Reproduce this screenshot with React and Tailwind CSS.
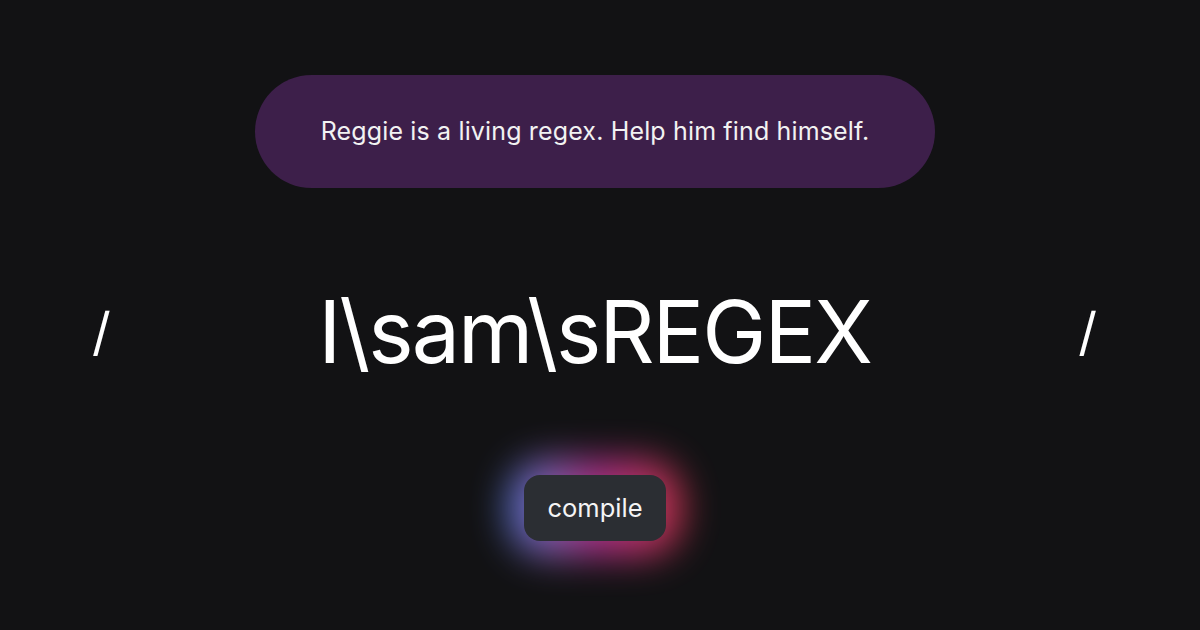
export default function App() {
  return (
    <div
      className="w-[1200px] h-[630px] bg-[#121214] text-white flex flex-col items-center pr-[10px]"
      style={{ fontFamily: 'Inter, "Noto Sans", sans-serif' }}
    >
      {/* prompt */}
      <div className="mt-[75px] w-[680px] h-[113px] rounded-full bg-[#3d1f4a] flex items-center justify-center">
        <p className="text-[25px] text-[#f2f2f2] tracking-[0.15px]">
          Reggie is a living regex. Help him find himself.
        </p>
      </div>

      {/* regex line */}
      <div className="mt-[98px] w-full flex items-center justify-between pl-[92px] pr-[93px] h-[92px]">
        <span className="text-[52px] leading-none">/</span>
        <span className="text-[86px] leading-none tracking-[-2px]">I\sam\sREGEX</span>
        <span className="text-[52px] leading-none">/</span>
      </div>

      {/* compile */}
      <div className="mt-[97px] relative">
        <div className="absolute -inset-[16px] rounded-[40px] bg-gradient-to-r from-[#4f86f0] via-[#c0309a] to-[#e8384f] blur-[18px] opacity-85" />
        <button className="relative w-[142px] h-[66px] rounded-[16px] bg-[#2b2e33] text-[25.5px] text-[#f4f4f5]">
          compile
        </button>
      </div>
    </div>
  );
}
